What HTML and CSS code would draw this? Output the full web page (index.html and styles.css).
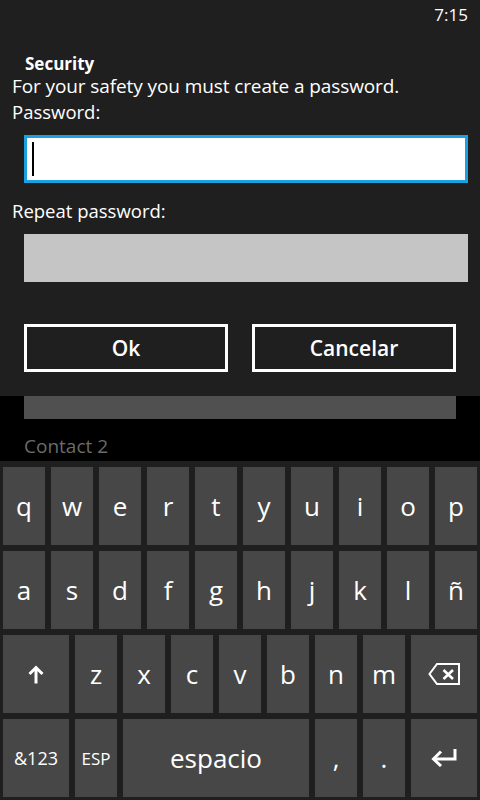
FILE: index.html
```html
<!DOCTYPE html>
<html>
<head>
<meta charset="utf-8">
<link rel="stylesheet" href="styles.css">
</head>
<body>
<div class="screen">
  <div class="dialog">
    <div class="status"><span class="time">7:15</span></div>
    <div class="title">Security</div>
    <div class="text">For your safety you must create a password.</div>
    <div class="label label-pass">Password:</div>
    <div class="input focused"><span class="caret"></span></div>
    <div class="label label-repeat">Repeat password:</div>
    <div class="input disabled"></div>
    <div class="buttons">
      <div class="btn">Ok</div>
      <div class="btn">Cancelar</div>
    </div>
  </div>
  <div class="behind">
    <div class="behind-bar"></div>
    <div class="behind-text">Contact 2</div>
  </div>
  <div class="keyboard">
    <div class="row">
      <div class="key">q</div><div class="key">w</div><div class="key">e</div><div class="key">r</div><div class="key">t</div><div class="key">y</div><div class="key">u</div><div class="key">i</div><div class="key">o</div><div class="key">p</div>
    </div>
    <div class="row">
      <div class="key">a</div><div class="key">s</div><div class="key">d</div><div class="key">f</div><div class="key">g</div><div class="key">h</div><div class="key">j</div><div class="key">k</div><div class="key">l</div><div class="key">ñ</div>
    </div>
    <div class="row">
      <div class="key wide"><svg width="16" height="19" viewBox="0 0 16 19"><path d="M8 18.5 V2.5 M1.5 9 L8 2.5 L14.5 9" fill="none" stroke="#fff" stroke-width="3"/></svg></div>
      <div class="key">z</div><div class="key">x</div><div class="key">c</div><div class="key">v</div><div class="key">b</div><div class="key">n</div><div class="key">m</div>
      <div class="key wide"><svg width="32" height="22" viewBox="0 0 32 22"><path d="M9 1 H31 V21 H9 L1.5 11 Z" fill="none" stroke="#fff" stroke-width="2"/><path d="M15.5 7 L25 16 M25 7 L15.5 16" stroke="#fff" stroke-width="2.6"/></svg></div>
    </div>
    <div class="row">
      <div class="key wide small">&amp;123</div>
      <div class="key smaller">ESP</div>
      <div class="key space">espacio</div>
      <div class="key">,</div>
      <div class="key">.</div>
      <div class="key wide"><svg width="26" height="18" viewBox="0 0 26 18"><path d="M24 0 V10 H4" fill="none" stroke="#fff" stroke-width="3"/><path d="M10 2.5 L2.5 10 L10 17" fill="none" stroke="#fff" stroke-width="3"/></svg></div>
    </div>
  </div>
</div>
</body>
</html>
```

FILE: styles.css
```css
html, body {
  margin: 0;
  padding: 0;
  background: #000;
}
.screen {
  width: 480px;
  height: 800px;
  overflow: hidden;
  font-family: "Open Sans", "Noto Sans", sans-serif;
  color: #fff;
  display: flex;
  flex-direction: column;
}
.dialog {
  background: #1f1f1f;
  height: 396px;
  box-sizing: border-box;
}
.status {
  height: 32px;
  box-sizing: border-box;
  padding-top: 3px;
  padding-right: 12px;
  text-align: right;
  font-size: 17px;
  line-height: 24px;
}
.title {
  margin-top: 22px;
  margin-left: 25px;
  font-size: 17px;
  font-weight: 700;
  line-height: 20px;
}
.text {
  margin-top: 1px;
  margin-left: 12px;
  font-size: 19px;
  letter-spacing: -0.1px;
  line-height: 22px;
}
.label {
  margin-left: 12px;
  font-size: 18.5px;
  line-height: 22px;
}
.label-pass {
  margin-top: 4px;
}
.label-repeat {
  margin-top: 17px;
}
.input {
  margin: 12px 12px 0 24px;
  height: 48px;
  box-sizing: border-box;
}
.input.focused {
  background: #fff;
  border: 3px solid #1ba1e2;
  display: flex;
  align-items: center;
  padding-left: 5px;
}
.caret {
  width: 2px;
  height: 34px;
  background: #000;
}
.input.disabled {
  background: #c5c5c5;
  margin-top: 12px;
}
.buttons {
  display: flex;
  gap: 24px;
  margin: 42px 0 0 24px;
}
.btn {
  width: 204px;
  height: 48px;
  box-sizing: border-box;
  border: 3px solid #fff;
  display: flex;
  align-items: center;
  justify-content: center;
  font-size: 21px;
  font-weight: 600;
}
.behind {
  height: 65px;
  background: #000;
  overflow: hidden;
}
.behind-bar {
  margin: 0 24px;
  height: 23px;
  background: #505050;
}
.behind-text {
  margin: 16px 0 0 24px;
  font-size: 19px;
  line-height: 22px;
  color: #6b6b6b;
}
.keyboard {
  flex: 1;
  background: #1f1f1f;
  padding: 6px 3px 3px 3px;
  display: flex;
  flex-direction: column;
  gap: 6px;
}
.row {
  display: flex;
  gap: 6px;
  height: 78px;
}
.key {
  width: 42px;
  height: 78px;
  background: #474747;
  display: flex;
  align-items: center;
  justify-content: center;
  font-size: 26px;
}
.key.wide {
  width: 66px;
}
.key.space {
  width: 186px;
}
.key.small {
  font-size: 18px;
}
.key.smaller {
  font-size: 17px;
}
```
